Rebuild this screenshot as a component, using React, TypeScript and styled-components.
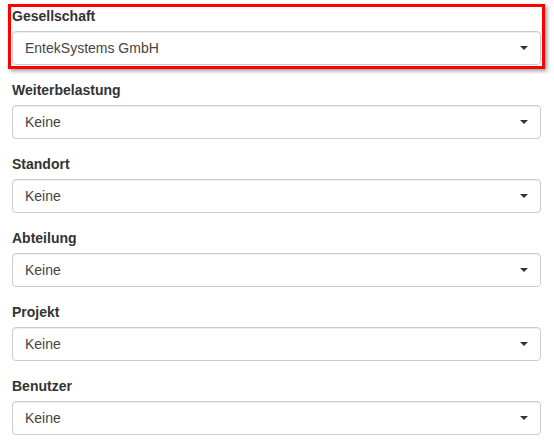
import styled, { createGlobalStyle } from "styled-components";

const GlobalStyle = createGlobalStyle`
  html, body {
    margin: 0;
    padding: 0;
    background: #fff;
  }
  body {
    font-family: "Liberation Sans", Arial, Helvetica, sans-serif;
    font-size: 14px;
    line-height: 20px;
    color: #333;
  }
`;

type Field = {
  label: string;
  value: string;
  highlighted?: boolean;
};

const fields: Field[] = [
  { label: "Gesellschaft", value: "EntekSystems GmbH", highlighted: true },
  { label: "Weiterbelastung", value: "Keine" },
  { label: "Standort", value: "Keine" },
  { label: "Abteilung", value: "Keine" },
  { label: "Projekt", value: "Keine" },
  { label: "Benutzer", value: "Keine" },
];

const App = () => {
  return (
    <StyledForm>
      <GlobalStyle />
      {fields.map(field => (
        <FormGroup key={field.label}>
          {field.highlighted && <Highlight />}
          <Label>{field.label}</Label>
          <SelectBox>
            <SelectValue>{field.value}</SelectValue>
            <Caret />
          </SelectBox>
        </FormGroup>
      ))}
    </StyledForm>
  );
};

const StyledForm = styled.form`
  width: 529px;
  padding: 6px 0 0 12px;
  display: flex;
  flex-direction: column;
  gap: 15px;
`;

const FormGroup = styled.div`
  position: relative;
  display: flex;
  flex-direction: column;
`;

// red annotation frame drawn over the first group
const Highlight = styled.div`
  position: absolute;
  inset: -2px -4px -4px -4px;
  border: 3px solid #f00;
  box-shadow: 2px 2px 4px rgba(0, 0, 0, 0.4);
  pointer-events: none;
`;

const Label = styled.label`
  font-weight: bold;
  font-size: 14px;
  line-height: 20px;
  color: #333;
  margin-bottom: 5px;
`;

const SelectBox = styled.div`
  box-sizing: border-box;
  height: 34px;
  padding: 6px 12px;
  display: flex;
  align-items: center;
  justify-content: space-between;
  border: 1px solid #ccc;
  border-radius: 4px;
  background: #fff;
  box-shadow: inset 0 1px 1px rgba(0, 0, 0, 0.075);
  cursor: pointer;
`;

const SelectValue = styled.span`
  color: #444;
  font-size: 14px;
  line-height: 20px;
`;

const Caret = styled.span`
  width: 0;
  height: 0;
  border-top: 4px solid #333;
  border-left: 4px solid transparent;
  border-right: 4px solid transparent;
`;

export default App;
